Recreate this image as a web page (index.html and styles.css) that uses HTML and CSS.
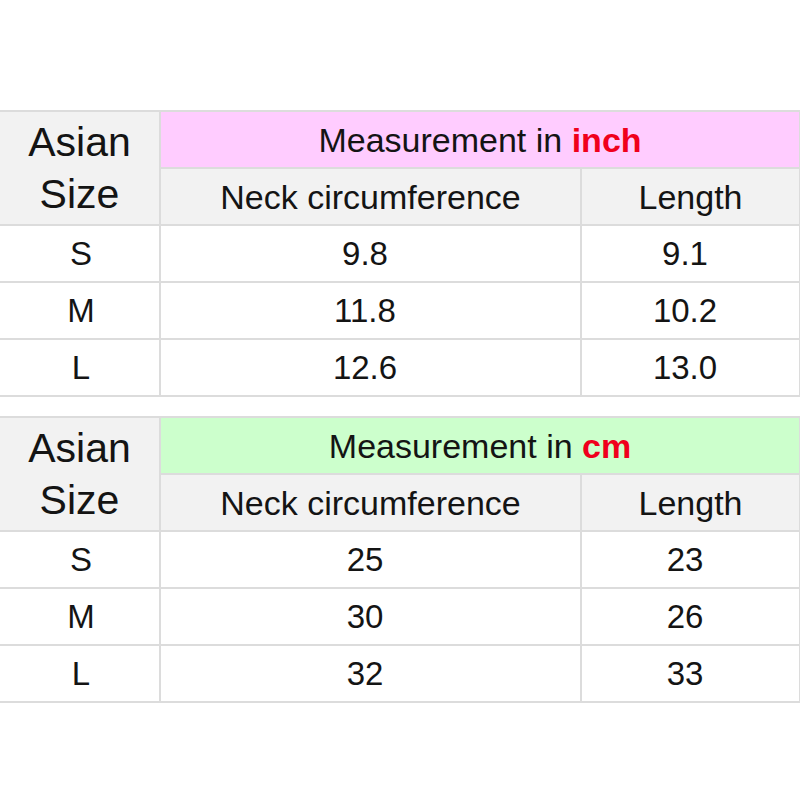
FILE: index.html
```html
<!DOCTYPE html>
<html>
<head>
<meta charset="utf-8">
<link rel="stylesheet" href="styles.css">
</head>
<body>
<div class="page">
  <table class="size-table">
    <colgroup><col class="c1"><col class="c2"><col class="c3"></colgroup>
    <tr>
      <td class="size-head" rowspan="2">Asian<br>Size</td>
      <td class="unit-head pink" colspan="2">Measurement in <b class="unit">inch</b></td>
    </tr>
    <tr>
      <td class="sub-head">Neck circumference</td>
      <td class="sub-head">Length</td>
    </tr>
    <tr><td class="size">S</td><td class="val">9.8</td><td class="val">9.1</td></tr>
    <tr><td class="size">M</td><td class="val">11.8</td><td class="val">10.2</td></tr>
    <tr><td class="size">L</td><td class="val">12.6</td><td class="val">13.0</td></tr>
  </table>

  <table class="size-table">
    <colgroup><col class="c1"><col class="c2"><col class="c3"></colgroup>
    <tr>
      <td class="size-head" rowspan="2">Asian<br>Size</td>
      <td class="unit-head green" colspan="2">Measurement in <b class="unit">cm</b></td>
    </tr>
    <tr>
      <td class="sub-head">Neck circumference</td>
      <td class="sub-head">Length</td>
    </tr>
    <tr><td class="size">S</td><td class="val">25</td><td class="val">23</td></tr>
    <tr><td class="size">M</td><td class="val">30</td><td class="val">26</td></tr>
    <tr><td class="size">L</td><td class="val">32</td><td class="val">33</td></tr>
  </table>
</div>
</body>
</html>
```

FILE: styles.css
```css
html, body {
  margin: 0;
  padding: 0;
  background: #ffffff;
}

.page {
  padding-top: 110px;
  display: flex;
  flex-direction: column;
  gap: 19px;
  width: 800px;
}

.size-table {
  border-collapse: collapse;
  width: 800px;
  table-layout: fixed;
  font-family: "Liberation Sans", Arial, sans-serif;
  color: #141414;
}

.c1 { width: 160px; }
.c2 { width: 421px; }
.c3 { width: 219px; }

.size-table td {
  border: 2px solid #dcdcdc;
  height: 55px;
  padding: 0;
  text-align: center;
  vertical-align: middle;
  font-size: 34px;
  line-height: 40px;
  background: #ffffff;
}

.size-table tr td:first-child {
  border-left: none;
}

.size-table td.size-head {
  background: #f2f2f2;
  font-size: 41px;
  line-height: 52px;
}

.size-table td.sub-head {
  background: #f2f2f2;
}

.size-table td.pink {
  background: #ffccff;
}

.size-table td.green {
  background: #ccffcc;
}

.size-table td.size {
  font-size: 33px;
  padding-left: 3px;
}

.size-table td.val {
  font-size: 33px;
  padding-right: 11px;
}

.unit {
  color: #f0001c;
  font-weight: bold;
}
```
